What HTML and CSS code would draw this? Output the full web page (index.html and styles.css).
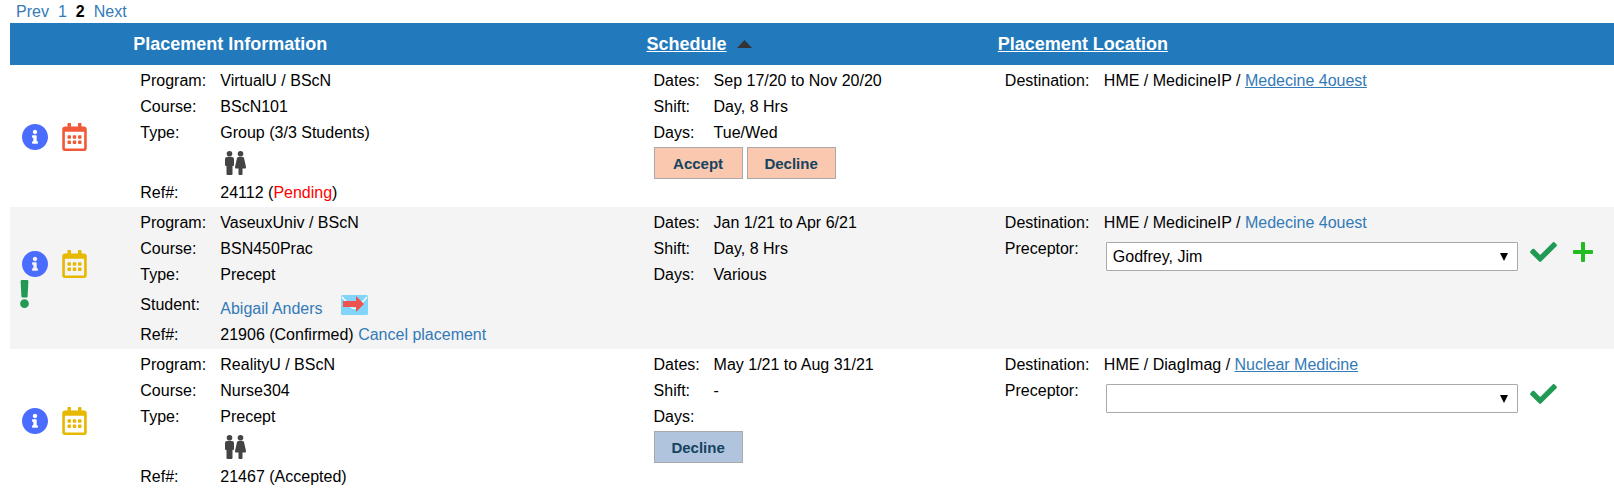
FILE: index.html
```
<!DOCTYPE html>
<html lang="en">
<head>
    <meta charset="UTF-8">
    <meta name="viewport" content="width=device-width, initial-scale=1.0">
    <title>Placements</title>
    <link rel="stylesheet" href="styles.css">
</head>
<body>
    <!-- shared icons -->
    <svg class="sprite" aria-hidden="true">
        <symbol id="info" viewBox="8 8 496 496"><path d="M256 8C119.043 8 8 119.083 8 256c0 136.997 111.043 248 248 248s248-111.003 248-248C504 119.083 392.957 8 256 8zm0 110c23.196 0 42 18.804 42 42s-18.804 42-42 42-42-18.804-42-42 18.804-42 42-42zm56 254c0 6.627-5.373 12-12 12h-88c-6.627 0-12-5.373-12-12v-24c0-6.627 5.373-12 12-12h12v-64h-12c-6.627 0-12-5.373-12-12v-24c0-6.627 5.373-12 12-12h64c6.627 0 12 5.373 12 12v100h12c6.627 0 12 5.373 12 12v24z"/></symbol>
        <symbol id="calendar" viewBox="0 0 448 512"><path d="M148 288h-40c-6.600 0-12-5.400-12-12v-40c0-6.600 5.400-12 12-12h40c6.600 0 12 5.400 12 12v40c0 6.600-5.400 12-12 12zm108-12v-40c0-6.600-5.400-12-12-12h-40c-6.600 0-12 5.400-12 12v40c0 6.600 5.400 12 12 12h40c6.600 0 12-5.400 12-12zm96 0v-40c0-6.600-5.400-12-12-12h-40c-6.600 0-12 5.400-12 12v40c0 6.600 5.400 12 12 12h40c6.600 0 12-5.400 12-12zm-96 96v-40c0-6.600-5.400-12-12-12h-40c-6.600 0-12 5.400-12 12v40c0 6.600 5.400 12 12 12h40c6.600 0 12-5.400 12-12zm-96 0v-40c0-6.600-5.400-12-12-12h-40c-6.600 0-12 5.400-12 12v40c0 6.600 5.400 12 12 12h40c6.600 0 12-5.400 12-12zm192 0v-40c0-6.600-5.400-12-12-12h-40c-6.600 0-12 5.400-12 12v40c0 6.600 5.400 12 12 12h40c6.600 0 12-5.400 12-12zm96-260v352c0 26.500-21.500 48-48 48H48c-26.500 0-48-21.500-48-48V112c0-26.500 21.500-48 48-48h48V12c0-6.600 5.400-12 12-12h40c6.600 0 12 5.400 12 12v52h128V12c0-6.600 5.400-12 12-12h40c6.600 0 12 5.400 12 12v52h48c26.500 0 48 21.500 48 48zm-48 346V160H48v298c0 3.300 2.700 6 6 6h340c3.300 0 6-2.700 6-6z"/></symbol>
        <symbol id="alert" viewBox="16 0 160 512"><path d="M176 432c0 44.112-35.888 80-80 80s-80-35.888-80-80 35.888-80 80-80 80 35.888 80 80zM25.260 25.199l13.600 272C39.499 309.972 50.041 320 62.830 320h66.340c12.789 0 23.331-10.028 23.970-22.801l13.600-272C167.425 11.490 156.496 0 142.770 0H49.230C35.504 0 24.575 11.490 25.260 25.199z"/></symbol>
        <symbol id="check" viewBox="0 65 512 382"><path d="M173.898 439.404l-166.400-166.400c-9.997-9.997-9.997-26.206 0-36.204l36.203-36.204c9.997-9.998 26.207-9.998 36.204 0L192 312.690 432.095 72.596c9.997-9.997 26.207-9.997 36.204 0l36.203 36.204c9.997 9.997 9.997 26.206 0 36.204l-294.400 294.401c-9.998 9.997-26.207 9.997-36.204-.001z"/></symbol>
        <symbol id="plus" viewBox="0 0 20 20"><path d="M9 0h2q1 0 1 1v7h7q1 0 1 1v2q0 1-1 1h-7v7q0 1-1 1H9q-1 0-1-1v-7H1q-1 0-1-1V9q0-1 1-1h7V1q0-1 1-1z"/></symbol>
        <symbol id="people" viewBox="0 0 22 24">
            <circle cx="4.500" cy="2.800" r="2.800"/>
            <path d="M2 6h5q2 0 2 2v6q0 1-1 1h-.5v8q0 1-1 1h-4q-1 0-1-1v-8H1q-1 0-1-1V8q0-2 2-2z"/>
            <circle cx="15.500" cy="2.800" r="2.800"/>
            <path d="M13.500 6h4q1 0 1.500 1l2 9q.2 1.500-1 1.500h-2.500V23q0 1-1 1h-2q-1 0-1-1v-5.500H11q-1.200 0-1-1.500l2-9q.5-1 1.500-1z"/>
        </symbol>
        <symbol id="triangle" viewBox="0 0 15 8"><path d="M7.500 0L15 8H0z"/></symbol>
    </svg>

    <nav class="pager">
        <a href="#">Prev</a>
        <a href="#">1</a>
        <b>2</b>
        <a href="#">Next</a>
    </nav>

    <table class="placements">
        <thead>
            <tr>
                <th class="col-icons"></th>
                <th class="col-info">Placement Information</th>
                <th class="col-schedule"><a href="#">Schedule</a><svg class="sort"><use href="#triangle"/></svg></th>
                <th class="col-location"><a href="#">Placement Location</a></th>
            </tr>
        </thead>
        <tbody>
            <tr>
                <td class="icons">
                    <div class="icon-row">
                        <button class="icon-btn" aria-label="Details"><svg class="info"><use href="#info"/></svg></button>
                        <button class="icon-btn" aria-label="Calendar"><svg class="calendar pending"><use href="#calendar"/></svg></button>
                    </div>
                </td>
                <td>
                    <dl class="info-list">
                        <dt>Program:</dt><dd>VirtualU / BScN</dd>
                        <dt>Course:</dt><dd>BScN101</dd>
                        <dt>Type:</dt><dd>Group (3/3 Students)</dd>
                        <dt class="tall"></dt><dd class="tall"><svg class="people"><use href="#people"/></svg></dd>
                        <dt>Ref#:</dt><dd>24112 (<span class="red">Pending</span>)</dd>
                    </dl>
                </td>
                <td>
                    <dl class="schedule-list">
                        <dt>Dates:</dt><dd>Sep 17/20 to Nov 20/20</dd>
                        <dt>Shift:</dt><dd>Day, 8 Hrs</dd>
                        <dt>Days:</dt><dd>Tue/Wed</dd>
                    </dl>
                    <div class="buttons">
                        <button class="btn">Accept</button>
                        <button class="btn">Decline</button>
                    </div>
                </td>
                <td>
                    <dl class="location-list">
                        <dt>Destination:</dt><dd>HME / MedicineIP / <a class="underline" href="#">Medecine 4ouest</a></dd>
                    </dl>
                </td>
            </tr>
            <tr>
                <td class="icons">
                    <div class="icon-row">
                        <button class="icon-btn" aria-label="Details"><svg class="info"><use href="#info"/></svg></button>
                        <button class="icon-btn" aria-label="Calendar"><svg class="calendar"><use href="#calendar"/></svg></button>
                    </div>
                    <svg class="alert"><use href="#alert"/></svg>
                </td>
                <td>
                    <dl class="info-list">
                        <dt>Program:</dt><dd>VaseuxUniv / BScN</dd>
                        <dt>Course:</dt><dd>BSN450Prac</dd>
                        <dt>Type:</dt><dd>Precept</dd>
                        <dt class="tall">Student:</dt>
                        <dd class="tall student">
                            <a href="#">Abigail Anders</a>
                            <button class="icon-btn" aria-label="Send email">
                                <svg class="mail" viewBox="0 0 27 20">
                                    <rect width="27" height="20" rx="1.500" fill="#81d4fa"/>
                                    <path d="M1 2l9 10q3.500 3 7 0l9-10" fill="none" stroke="#fff" stroke-width="1.500"/>
                                    <path d="M2 6h13V1l8 8-8 8v-5H2z" fill="#ef5350"/>
                                </svg>
                            </button>
                        </dd>
                        <dt>Ref#:</dt><dd>21906 (Confirmed) <a href="#">Cancel placement</a></dd>
                    </dl>
                </td>
                <td>
                    <dl class="schedule-list">
                        <dt>Dates:</dt><dd>Jan 1/21 to Apr 6/21</dd>
                        <dt>Shift:</dt><dd>Day, 8 Hrs</dd>
                        <dt>Days:</dt><dd>Various</dd>
                    </dl>
                </td>
                <td>
                    <dl class="location-list">
                        <dt>Destination:</dt><dd>HME / MedicineIP / <a href="#">Medecine 4ouest</a></dd>
                        <dt><label for="preceptor1">Preceptor:</label></dt>
                        <dd class="preceptor">
                            <select id="preceptor1">
                                <option>Godfrey, Jim</option>
                            </select>
                            <div class="actions">
                                <button class="icon-btn" aria-label="Save"><svg class="check"><use href="#check"/></svg></button>
                                <button class="icon-btn" aria-label="Add"><svg class="plus"><use href="#plus"/></svg></button>
                            </div>
                        </dd>
                    </dl>
                </td>
            </tr>
            <tr>
                <td class="icons">
                    <div class="icon-row">
                        <button class="icon-btn" aria-label="Details"><svg class="info"><use href="#info"/></svg></button>
                        <button class="icon-btn" aria-label="Calendar"><svg class="calendar"><use href="#calendar"/></svg></button>
                    </div>
                </td>
                <td>
                    <dl class="info-list">
                        <dt>Program:</dt><dd>RealityU / BScN</dd>
                        <dt>Course:</dt><dd>Nurse304</dd>
                        <dt>Type:</dt><dd>Precept</dd>
                        <dt class="tall"></dt><dd class="tall"><svg class="people"><use href="#people"/></svg></dd>
                        <dt>Ref#:</dt><dd>21467 (Accepted)</dd>
                    </dl>
                </td>
                <td>
                    <dl class="schedule-list">
                        <dt>Dates:</dt><dd>May 1/21 to Aug 31/21</dd>
                        <dt>Shift:</dt><dd>-</dd>
                        <dt>Days:</dt><dd></dd>
                    </dl>
                    <div class="buttons">
                        <button class="btn btn-blue">Decline</button>
                    </div>
                </td>
                <td>
                    <dl class="location-list">
                        <dt>Destination:</dt><dd>HME / DiagImag / <a class="underline" href="#">Nuclear Medicine</a></dd>
                        <dt><label for="preceptor2">Preceptor:</label></dt>
                        <dd class="preceptor">
                            <select id="preceptor2">
                                <option></option>
                            </select>
                            <div class="actions">
                                <button class="icon-btn" aria-label="Save"><svg class="check"><use href="#check"/></svg></button>
                            </div>
                        </dd>
                    </dl>
                </td>
            </tr>
        </tbody>
    </table>
</body>
</html>
```

FILE: styles.css
```
body {
    margin: 0;
    padding-left: 10px;
    font-family: "Liberation Sans", Arial, sans-serif;
    font-size: 16px;
    line-height: 26px;
    color: #000;
    background-color: #fff;
}
a {
    color: #337ab7;
    text-decoration: none;
}
svg {
    display: block;
    fill: currentColor;
}
.sprite {
    display: none;
}
.underline {
    text-decoration: underline;
}
.red {
    color: red;
}
.pager {
    display: flex;
    gap: 9px;
    padding-left: 6px;
    line-height: 23px;
}

/* table */
.placements {
    width: 100%;
    table-layout: fixed;
    border-collapse: collapse;
}
th {
    box-sizing: border-box;
    height: 42px;
    padding: 0 3px;
    font-size: 18px;
    line-height: 26px;
    text-align: left;
    color: #fff;
    background-color: #2279bc;
}
th a {
    color: #fff;
    text-decoration: underline;
}
.col-icons {
    width: 7.5%;
}
.col-info {
    width: 32%;
}
.col-schedule {
    width: 21.9%;
}
.sort {
    display: inline-block;
    width: 15px;
    height: 8px;
    margin-left: 10px;
    vertical-align: 2px;
    color: #333;
}
td {
    padding: 3px 0 1px 10px;
    vertical-align: top;
}
tbody tr:nth-child(even) {
    background-color: #f4f4f4;
}
tbody tr:last-child td {
    padding-bottom: 0;
}

/* label / value lists */
dl {
    display: grid;
    margin: 0;
}
dt, dd {
    margin: 0;
    min-height: 26px;
}
.info-list {
    grid-template-columns: 80px 1fr;
}
.schedule-list {
    grid-template-columns: 60px 1fr;
}
.location-list {
    grid-template-columns: 99px 1fr;
}
.tall {
    display: flex;
    align-items: center;
    height: 34px;
}
.student a {
    padding-top: 8px;
}
.student .icon-btn {
    margin-left: 18px;
}

/* icons */
.icon-btn {
    padding: 0;
    border: none;
    background: none;
    cursor: pointer;
}
.icons {
    vertical-align: middle;
}
.icon-row {
    display: flex;
    align-items: center;
    gap: 14px;
    padding-left: 2px;
}
.info {
    width: 26px;
    height: 26px;
    color: #4a6cff;
}
.calendar {
    width: 25px;
    height: 28px;
    color: #e6b800;
}
.calendar.pending {
    color: #f15a38;
}
.alert {
    width: 9px;
    height: 28px;
    margin-top: 2px;
    color: #229a56;
}
.people {
    width: 22px;
    height: 24px;
    margin-left: 5px;
    color: #444;
}
.mail {
    width: 27px;
    height: 20px;
}
.check {
    width: 27px;
    height: 20px;
    color: #229a56;
}
.plus {
    width: 20px;
    height: 20px;
    color: #22bb22;
}

/* controls */
.buttons {
    display: flex;
    gap: 4px;
    padding-top: 1px;
}
.btn {
    width: 89px;
    height: 32px;
    padding: 0;
    font-family: inherit;
    font-size: 15px;
    font-weight: bold;
    color: #154360;
    background-color: #f9c8ae;
    border: 1px solid #a9a9a9;
    cursor: pointer;
}
.btn-blue {
    background-color: #b0c4de;
}
.preceptor {
    display: flex;
    gap: 12px;
    padding: 6px 0 0 2px;
}
.preceptor select {
    flex: 1;
    min-width: 0;
    height: 29px;
    padding: 0 6px;
    font-family: inherit;
    font-size: 16px;
    color: #000;
    border: 1px solid #a9a9a9;
    border-radius: 1px;
    appearance: none;
    background: #fff url("data:image/svg+xml,%3Csvg xmlns='http://www.w3.org/2000/svg' width='8' height='8'%3E%3Cpath d='M0 0h8L4 8z'/%3E%3C/svg%3E") no-repeat right 9px center;
}
.actions {
    display: flex;
    align-items: center;
    align-self: flex-start;
    gap: 16px;
    width: 84px;
}
```
